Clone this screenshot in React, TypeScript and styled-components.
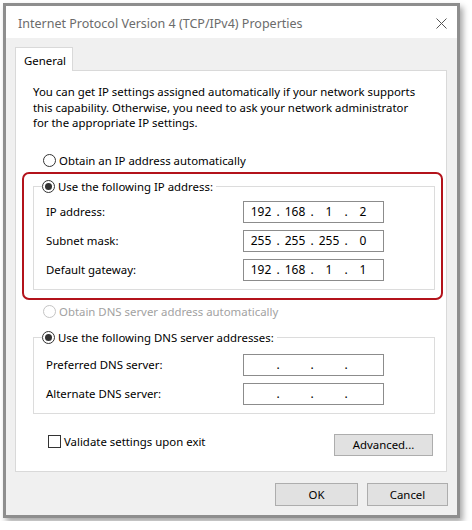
import React from 'react';
import styled, { createGlobalStyle } from 'styled-components';

// Global page reset

const GlobalStyle = createGlobalStyle`
  html, body {
    margin: 0;
    background: #fff;
  }
  body {
    font-family: "Noto Sans", "Liberation Sans", sans-serif;
    font-size: 11.4px;
    color: #000;
  }
`;

// Styled-components

const Page = styled.div`
  padding: 3px;
`;

const Window = styled.div`
  width: 457px;
  height: 515px;
  box-sizing: border-box;
  border: 3px solid #8e8e8e;
  box-shadow: 3px 4px 6px rgba(0, 0, 0, 0.35);
  background: #f0f0f0;
  display: flex;
  flex-direction: column;
`;

const TitleBar = styled.div`
  height: 32px;
  padding: 2px 10px 0 12px;
  box-sizing: border-box;
  background: #fff;
  display: flex;
  align-items: center;
  justify-content: space-between;
  color: #6b6b6b;
  font-size: 12.5px;
`;

const CloseIcon = styled.svg`
  width: 11px;
  height: 11px;
  stroke: #555;
  stroke-width: 1;
`;

const Body = styled.div`
  flex: 1;
  padding: 9px 10px 0 9px;
  display: flex;
  flex-direction: column;
`;

const TabStrip = styled.div`
  display: flex;
`;

const Tab = styled.div`
  position: relative;
  z-index: 1;
  width: 58px;
  height: 24px;
  box-sizing: border-box;
  padding: 5px 0 0 8px;
  margin-bottom: -1px;
  background: #fff;
  border: 1px solid #d9d9d9;
  border-bottom: none;
`;

const Panel = styled.div`
  height: 402px;
  box-sizing: border-box;
  padding: 13px 11px 0 17px;
  background: #fff;
  border: 1px solid #d9d9d9;
  display: flex;
  flex-direction: column;
`;

const Description = styled.p`
  margin: 0;
  line-height: 15.5px;
  white-space: nowrap;
`;

const OptionRow = styled.label<{ $disabled?: boolean; $top?: number }>`
  display: flex;
  align-items: center;
  gap: 3px;
  height: 16px;
  margin-top: ${(p) => p.$top ?? 0}px;
  margin-left: 10px;
  color: ${(p) => (p.$disabled ? '#a2a2a2' : '#000')};
`;

const RadioCircle = styled.span<{ $checked?: boolean; $disabled?: boolean }>`
  width: 13px;
  height: 13px;
  box-sizing: border-box;
  border-radius: 50%;
  border: 1px solid ${(p) => (p.$disabled ? '#c4c4c4' : '#333')};
  background: #fff;
  display: flex;
  align-items: center;
  justify-content: center;

  &::after {
    content: '';
    display: ${(p) => (p.$checked ? 'block' : 'none')};
    width: 7px;
    height: 7px;
    border-radius: 50%;
    background: #333;
  }
`;

const Highlight = styled.div`
  margin: 3px -8px 0 -11px;
  padding: 5px 6px 8px 9px;
  border: 2px solid #b3131b;
  border-radius: 7px;
`;

const Group = styled.fieldset<{ $top?: number; $padTop?: number }>`
  margin: ${(p) => p.$top ?? 0}px 0 0;
  padding: ${(p) => p.$padTop ?? 6}px 12px 8px 12px;
  border: 1px solid #dcdcdc;
  min-width: 0;
`;

const Legend = styled.legend`
  margin-left: -4px;
  padding: 0 3px 0 0;

  ${OptionRow} {
    margin-left: 0;
  }
`;

const FieldGrid = styled.div`
  display: grid;
  grid-template-columns: 197px 141px;
  row-gap: 7px;
  align-items: center;
`;

const AddressBox = styled.div`
  height: 22px;
  box-sizing: border-box;
  border: 1px solid #8c8c8c;
  background: #fff;
  padding-left: 4px;
  display: grid;
  grid-template-columns: 26px 8px 26px 8px 26px 8px 26px;
  align-items: center;
  text-align: center;
  font-size: 12px;
`;

const Dot = styled.span`
  text-align: center;
`;

const Footer = styled.div`
  display: flex;
  justify-content: space-between;
  align-items: flex-start;
  margin-top: 20px;
  padding: 0 2px 0 15px;
`;

const CheckRow = styled.label`
  display: flex;
  align-items: center;
  gap: 3px;
  height: 13px;
  margin-top: 1px;
`;

const CheckBox = styled.span`
  width: 13px;
  height: 13px;
  box-sizing: border-box;
  border: 1px solid #333;
  background: #fff;
`;

const Button = styled.button<{ $width: number; $height?: number }>`
  width: ${(p) => p.$width}px;
  height: ${(p) => p.$height ?? 23}px;
  padding: 0;
  font: inherit;
  color: #000;
  background: #e1e1e1;
  border: 1px solid #adadad;
`;

const DialogButtons = styled.div`
  display: flex;
  justify-content: flex-end;
  gap: 9px;
  margin: 11px -1px 0 0;
`;

// JSX-Components

const Radio: React.FC<{ checked?: boolean; disabled?: boolean; top?: number; children: React.ReactNode }> = ({
  checked,
  disabled,
  top,
  children,
}) => (
  <OptionRow $disabled={disabled} $top={top}>
    <RadioCircle $checked={checked} $disabled={disabled} />
    {children}
  </OptionRow>
);

const AddressField: React.FC<{ parts?: string[] }> = ({ parts = ['', '', '', ''] }) => (
  <AddressBox>
    {parts.map((part, i) => (
      <React.Fragment key={i}>
        <span>{part}</span>
        {i < 3 && <Dot>.</Dot>}
      </React.Fragment>
    ))}
  </AddressBox>
);

const ipRows = [
  { label: 'IP address:', parts: ['192', '168', '1', '2'] },
  { label: 'Subnet mask:', parts: ['255', '255', '255', '0'] },
  { label: 'Default gateway:', parts: ['192', '168', '1', '1'] },
];

const dnsRows = ['Preferred DNS server:', 'Alternate DNS server:'];

const App: React.FC = () => {
  return (
    <Page>
      <GlobalStyle />
      <Window>
        <TitleBar>
          <span>Internet Protocol Version 4 (TCP/IPv4) Properties</span>
          <CloseIcon viewBox="0 0 11 11">
            <path d="M0.5 0.5 L10.5 10.5 M10.5 0.5 L0.5 10.5" />
          </CloseIcon>
        </TitleBar>
        <Body>
          <TabStrip>
            <Tab>General</Tab>
          </TabStrip>
          <Panel>
            <Description>
              You can get IP settings assigned automatically if your network supports
              <br />
              this capability. Otherwise, you need to ask your network administrator
              <br />
              for the appropriate IP settings.
            </Description>

            <Radio top={22}>Obtain an IP address automatically</Radio>

            <Highlight>
              <Group>
                <Legend>
                  <Radio checked>Use the following IP address:</Radio>
                </Legend>
                <FieldGrid>
                  {ipRows.map((row) => (
                    <React.Fragment key={row.label}>
                      <span>{row.label}</span>
                      <AddressField parts={row.parts} />
                    </React.Fragment>
                  ))}
                </FieldGrid>
              </Group>
            </Highlight>

            <Radio disabled top={4}>
              Obtain DNS server address automatically
            </Radio>

            <Group $top={10} $padTop={8}>
              <Legend>
                <Radio checked>Use the following DNS server addresses:</Radio>
              </Legend>
              <FieldGrid>
                {dnsRows.map((label) => (
                  <React.Fragment key={label}>
                    <span>{label}</span>
                    <AddressField />
                  </React.Fragment>
                ))}
              </FieldGrid>
            </Group>

            <Footer>
              <CheckRow>
                <CheckBox />
                Validate settings upon exit
              </CheckRow>
              <Button $width={99} $height={22}>
                Advanced...
              </Button>
            </Footer>
          </Panel>
          <DialogButtons>
            <Button $width={83}>OK</Button>
            <Button $width={81}>Cancel</Button>
          </DialogButtons>
        </Body>
      </Window>
    </Page>
  );
};

export default App;
